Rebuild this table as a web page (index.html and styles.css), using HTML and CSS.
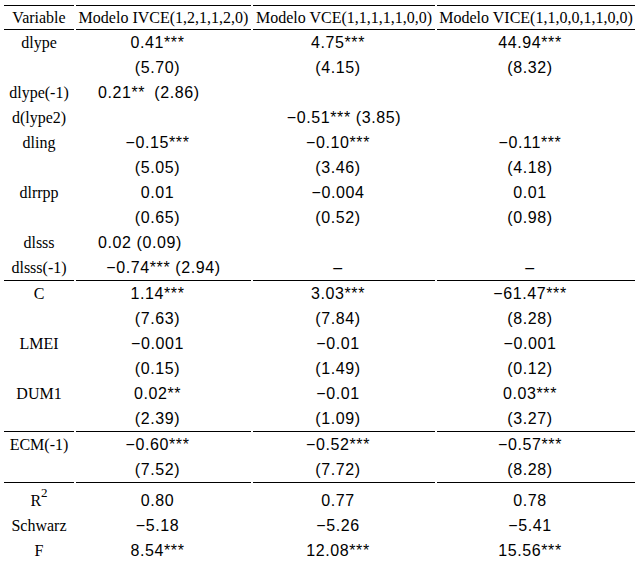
FILE: index.html
```html
<!DOCTYPE html>
<html lang="es">
<head>
<meta charset="utf-8">
<title>Modelos</title>
<link rel="stylesheet" href="styles.css">
</head>
<body>
<table class="reg">
  <colgroup><col class="c1"><col class="c2"><col class="c3"><col class="c4"></colgroup>
  <thead>
    <tr><th>Variable</th><th>Modelo IVCE(1,2,1,1,2,0)</th><th>Modelo VCE(1,1,1,1,1,0,0)</th><th>Modelo VICE(1,1,0,0,1,1,0,0)</th></tr>
  </thead>
  <tbody>
    <tr><td class="lab">dlype</td><td>0.41***</td><td>4.75***</td><td>44.94***</td></tr>
    <tr><td class="lab"></td><td>(5.70)</td><td>(4.15)</td><td>(8.32)</td></tr>
    <tr><td class="lab">dlype(-1)</td><td class="left">0.21**<span class="se wide">(2.86)</span></td><td></td><td></td></tr>
    <tr><td class="lab">d(lype2)</td><td></td><td class="nopad">−0.51***<span class="se">(3.85)</span></td><td></td></tr>
    <tr><td class="lab">dling</td><td>−0.15***</td><td>−0.10***</td><td>−0.11***</td></tr>
    <tr><td class="lab"></td><td>(5.05)</td><td>(3.46)</td><td>(4.18)</td></tr>
    <tr><td class="lab">dlrrpp</td><td>0.01</td><td>−0.004</td><td>0.01</td></tr>
    <tr><td class="lab"></td><td>(0.65)</td><td>(0.52)</td><td>(0.98)</td></tr>
    <tr><td class="lab">dlsss</td><td class="left">0.02<span class="se">(0.09)</span></td><td></td><td></td></tr>
    <tr><td class="lab">dlsss(-1)</td><td class="nopad">−0.74***<span class="se">(2.94)</span></td><td>–</td><td>–</td></tr>
    <tr class="sep"><td class="lab">C</td><td>1.14***</td><td>3.03***</td><td>−61.47***</td></tr>
    <tr><td class="lab"></td><td>(7.63)</td><td>(7.84)</td><td>(8.28)</td></tr>
    <tr><td class="lab">LMEI</td><td>−0.001</td><td>−0.01</td><td>−0.001</td></tr>
    <tr><td class="lab"></td><td>(0.15)</td><td>(1.49)</td><td>(0.12)</td></tr>
    <tr><td class="lab">DUM1</td><td>0.02**</td><td>−0.01</td><td>0.03***</td></tr>
    <tr><td class="lab"></td><td>(2.39)</td><td>(1.09)</td><td>(3.27)</td></tr>
    <tr class="sep"><td class="lab">ECM(-1)</td><td>−0.60***</td><td>−0.52***</td><td>−0.57***</td></tr>
    <tr><td class="lab"></td><td>(7.52)</td><td>(7.72)</td><td>(8.28)</td></tr>
    <tr class="sep r2"><td class="lab">R<sup>2</sup></td><td>0.80</td><td>0.77</td><td>0.78</td></tr>
    <tr><td class="lab">Schwarz</td><td>−5.18</td><td>−5.26</td><td>−5.41</td></tr>
    <tr><td class="lab">F</td><td>8.54***</td><td>12.08***</td><td>15.56***</td></tr>
  </tbody>
</table>
</body>
</html>
```

FILE: styles.css
```css
html, body {
  margin: 0;
  padding: 0;
  background: #ffffff;
  color: #000000;
}

.reg {
  margin: 5px 0 0 2px;
  border-collapse: separate;
  border-spacing: 2px 0;
  table-layout: fixed;
  width: 635px;
}

.c1 { width: 70px; }
.c2 { width: 175px; }
.c3 { width: 182px; }
.c4 { width: 198px; }

.reg th {
  font-family: "Liberation Serif", "Times New Roman", serif;
  font-size: 16px;
  font-weight: normal;
  line-height: 23px;
  padding: 0;
  text-align: center;
  white-space: nowrap;
  border-top: 1px solid #000;
  border-bottom: 1px solid #000;
}

.reg td {
  font-family: "Liberation Sans", Arial, sans-serif;
  font-size: 16px;
  letter-spacing: 0.6px;
  line-height: 25px;
  padding: 0 12px 0 0;
  text-align: center;
  white-space: nowrap;
  vertical-align: top;
}

.reg td.lab {
  font-family: "Liberation Serif", "Times New Roman", serif;
  letter-spacing: 0;
  padding: 0;
}

.reg td.left {
  text-align: left;
  padding: 0 0 0 22px;
}

.reg td.nopad {
  padding: 0;
}

.se {
  margin-left: 5px;
}

.se.wide {
  margin-left: 9px;
}

.reg tr.sep td {
  border-top: 1px solid #000;
}

.reg tr.r2 td {
  padding-top: 5px;
}

.reg sup {
  font-size: 13px;
  line-height: 0;
  vertical-align: 9px;
}
```
